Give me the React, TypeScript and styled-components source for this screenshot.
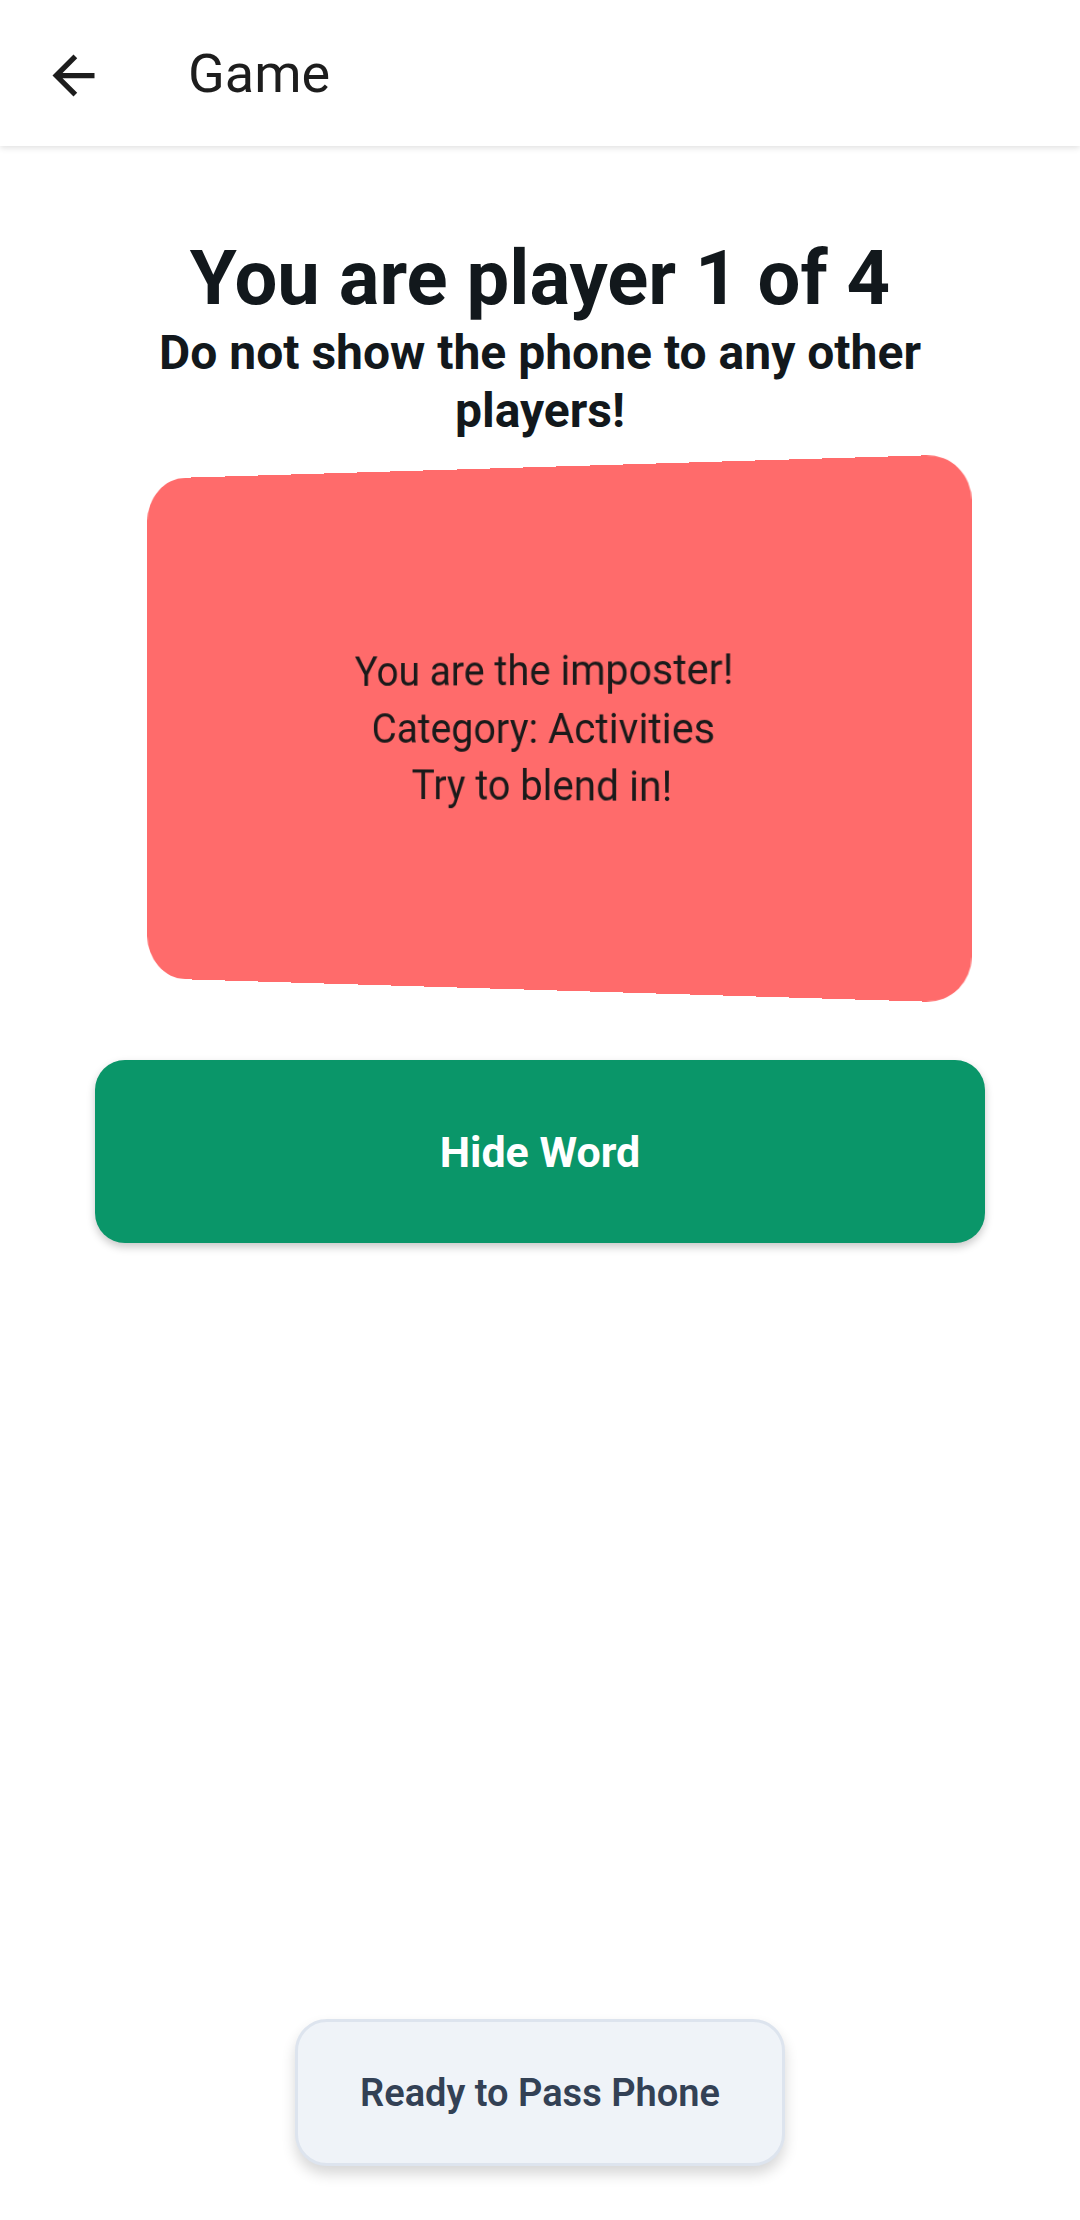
import React from "react";
import styled, { createGlobalStyle } from "styled-components";

const Global = createGlobalStyle`
  html, body {
    margin: 0;
    padding: 0;
    background: #ffffff;
    font-family: Roboto, "Noto Sans", "Liberation Sans", sans-serif;
  }
  * { box-sizing: border-box; }
`;

const Screen = styled.div`
  min-height: 2220px;
  display: flex;
  flex-direction: column;
  background: #ffffff;
`;

const TopBar = styled.header`
  height: 146px;
  display: flex;
  align-items: center;
  padding-left: 42px;
  background: #ffffff;
  box-shadow: 0 2px 6px rgba(0, 0, 0, 0.12);
  position: relative;
  z-index: 2;
`;

const BackButton = styled.button`
  width: 63px;
  height: 63px;
  padding: 0;
  border: none;
  background: transparent;
  display: flex;
  align-items: center;
  justify-content: center;
  margin-top: 4px;
  svg { display: block; }
`;

const BarTitle = styled.h1`
  margin: 0 0 0 83px;
  font-size: 54px;
  font-weight: 400;
  color: #1d1d1d;
  letter-spacing: 0;
`;

const Main = styled.main`
  flex: 1;
  display: flex;
  flex-direction: column;
  align-items: center;
  padding: 86px 95px 0;
`;

const Heading = styled.h2`
  margin: 0;
  font-size: 76px;
  line-height: 92px;
  font-weight: 700;
  color: #12181c;
  text-align: center;
`;

const Warning = styled.p`
  margin: 0;
  font-size: 48px;
  line-height: 58px;
  font-weight: 700;
  color: #12181c;
  text-align: center;
`;

const CardStage = styled.div`
  width: 100%;
  margin-top: 27px;
  display: flex;
  justify-content: center;
  perspective: 3124px;
`;

const RoleCard = styled.div<{ $tone: string }>`
  width: 874px;
  height: 523px;
  border-radius: 44px;
  background: ${(p) => p.$tone};
  transform: rotateY(-19.8deg);
  display: flex;
  flex-direction: column;
  align-items: center;
  justify-content: center;
  text-align: center;
`;

const CardLine = styled.div`
  font-size: 42.5px;
  line-height: 57.5px;
  font-weight: 400;
  color: #1a1a1a;
`;

const PrimaryButton = styled.button`
  margin-top: 70px;
  width: 100%;
  height: 183px;
  border: none;
  border-radius: 30px;
  background: #0a9669;
  color: #ffffff;
  font-family: inherit;
  font-size: 43px;
  font-weight: 700;
  box-shadow: 0 4px 8px rgba(0, 0, 0, 0.22);
`;

const Footer = styled.footer`
  display: flex;
  justify-content: center;
  padding-bottom: 54px;
`;

const SecondaryButton = styled.button`
  width: 490px;
  height: 147px;
  border: 3px solid #dde4ee;
  border-radius: 32px;
  background: #eff3f8;
  color: #334155;
  font-family: inherit;
  font-size: 38px;
  font-weight: 600;
  box-shadow: 0 8px 14px rgba(0, 0, 0, 0.16);
`;

const ArrowBack = () => (
  <svg width="63" height="63" viewBox="0 0 24 24" fill="#1d1d1d">
    <path d="M20 11H7.83l5.59-5.59L12 4l-8 8 8 8 1.41-1.41L7.83 13H20v-2z" />
  </svg>
);

export default function App() {
  const lines = ["You are the imposter!", "Category: Activities", "Try to blend in!"];
  return (
    <>
      <Global />
      <Screen>
        <TopBar>
          <BackButton aria-label="Back">
            <ArrowBack />
          </BackButton>
          <BarTitle>Game</BarTitle>
        </TopBar>
        <Main>
          <Heading>You are player 1 of 4</Heading>
          <Warning>Do not show the phone to any other players!</Warning>
          <CardStage>
            <RoleCard $tone="#ff6b6b">
              {lines.map((l) => (
                <CardLine key={l}>{l}</CardLine>
              ))}
            </RoleCard>
          </CardStage>
          <PrimaryButton>Hide Word</PrimaryButton>
        </Main>
        <Footer>
          <SecondaryButton>Ready to Pass Phone</SecondaryButton>
        </Footer>
      </Screen>
    </>
  );
}
